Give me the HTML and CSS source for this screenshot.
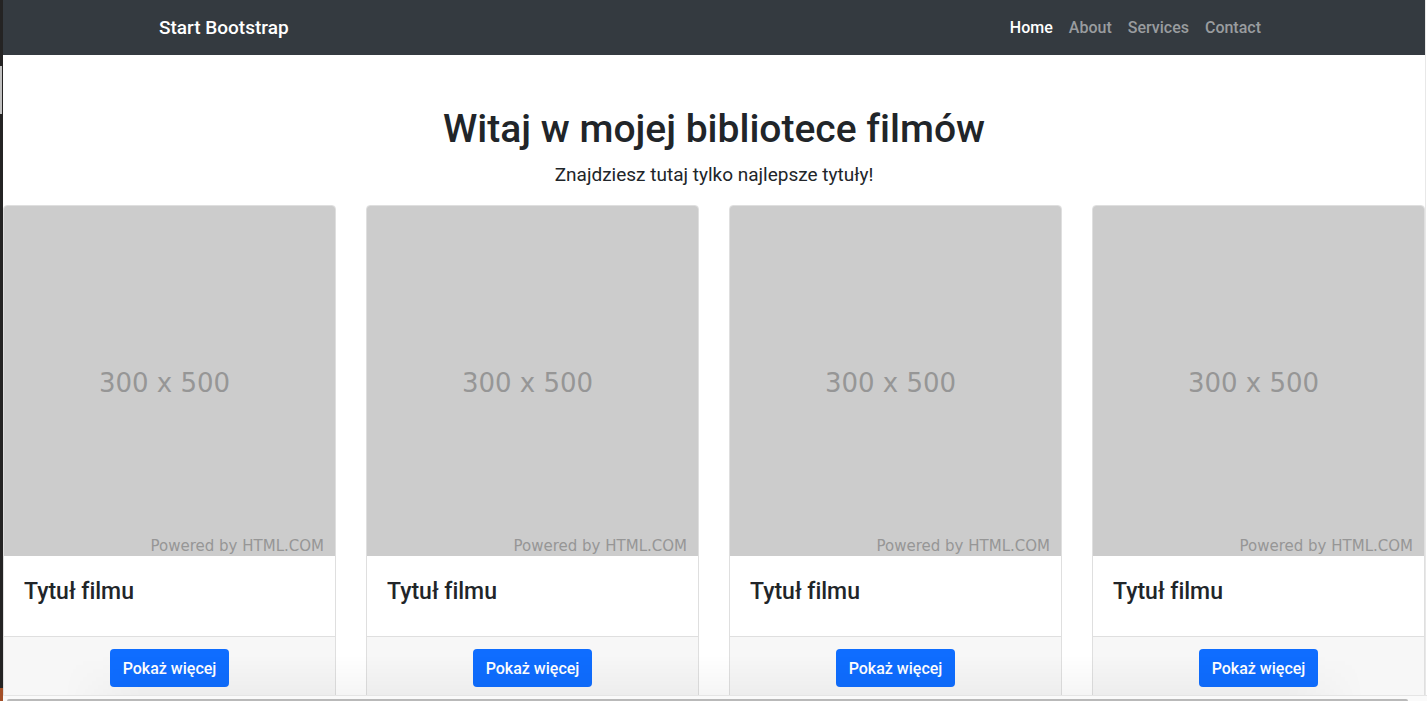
FILE: index.html
```html
<!DOCTYPE html>
<html lang="pl">
<head>
<meta charset="utf-8">
<title>Biblioteka filmów</title>
<link rel="stylesheet" href="styles.css">
</head>
<body>
<div class="backdrop"><div class="backdrop-thumb"></div><div class="backdrop-base"></div></div>
<div class="window">
  <div class="page">
    <nav class="navbar">
      <div class="container">
        <a class="brand" href="#">Start Bootstrap</a>
        <div class="nav-links">
          <a class="nav-link active" href="#">Home</a>
          <a class="nav-link" href="#">About</a>
          <a class="nav-link" href="#">Services</a>
          <a class="nav-link" href="#">Contact</a>
        </div>
      </div>
    </nav>
    <header class="hero">
      <h1 class="hero-title">Witaj w mojej bibliotece filmów</h1>
      <p class="lead">Znajdziesz tutaj tylko najlepsze tytuły!</p>
    </header>
    <main class="cards">
      <article class="card">
        <div class="poster"><span class="poster-size">300 x 500</span><span class="poster-credit">Powered by HTML.COM</span></div>
        <div class="card-body"><h2 class="card-title">Tytuł filmu</h2></div>
        <div class="card-footer"><a class="btn" href="#">Pokaż więcej</a></div>
      </article>
      <article class="card">
        <div class="poster"><span class="poster-size">300 x 500</span><span class="poster-credit">Powered by HTML.COM</span></div>
        <div class="card-body"><h2 class="card-title">Tytuł filmu</h2></div>
        <div class="card-footer"><a class="btn" href="#">Pokaż więcej</a></div>
      </article>
      <article class="card">
        <div class="poster"><span class="poster-size">300 x 500</span><span class="poster-credit">Powered by HTML.COM</span></div>
        <div class="card-body"><h2 class="card-title">Tytuł filmu</h2></div>
        <div class="card-footer"><a class="btn" href="#">Pokaż więcej</a></div>
      </article>
      <article class="card">
        <div class="poster"><span class="poster-size">300 x 500</span><span class="poster-credit">Powered by HTML.COM</span></div>
        <div class="card-body"><h2 class="card-title">Tytuł filmu</h2></div>
        <div class="card-footer"><a class="btn" href="#">Pokaż więcej</a></div>
      </article>
    </main>
    <div class="shade"></div>
  </div>
  <div class="scroll-track"><div class="scroll-thumb"></div></div>
</div>
</body>
</html>
```
FILE: styles.css
```css
* { box-sizing: border-box; }
body {
  margin: 0;
  height: 100vh;
  display: flex;
  overflow: hidden;
  background: #fff;
  color: #212529;
  font: 400 16px/24px Roboto, "Liberation Sans", sans-serif;
  font-variant-ligatures: none;
}
a { text-decoration: none; }

.backdrop {
  width: 3px;
  padding-top: 66px;
  display: flex;
  flex-direction: column;
  background: #242323;
}
.backdrop-thumb { width: 2px; height: 48px; background: #c1c1c1; }
.backdrop-base { height: 13px; margin-top: auto; background: #a34f27; }

.window { flex: 1; min-width: 0; display: flex; flex-direction: column; }
.page {
  flex: 1;
  min-height: 0;
  overflow: hidden;
  position: relative;
  margin-right: 1px;
  border-right: 1px solid #e8e8e8;
}

.navbar { background: #343a40; padding: 8px 0 7px; }
.container {
  max-width: 1140px;
  margin: 0 auto;
  padding: 0 15px;
  display: flex;
  align-items: center;
  justify-content: space-between;
}
.brand { color: #fff; font-size: 19px; font-weight: 500; }
.nav-links { display: flex; }
.nav-link { padding: 8px; color: #999c9f; font-size: 16px; font-weight: 500; }
.nav-link.active { color: #fff; }

.hero { padding-top: 50px; text-align: center; }
.hero-title { margin: 0 0 8px; font-size: 39px; line-height: 48px; font-weight: 500; }
.lead { margin: 0 0 16px; font-size: 19px; line-height: 28px; font-weight: 400; }

.cards { display: grid; grid-template-columns: repeat(4, 1fr); gap: 30px; }
.card {
  border: 1px solid #dfdfdf;
  border-radius: 4px;
  overflow: hidden;
  background: #fff;
}
.poster {
  position: relative;
  height: 350px;
  padding: 3px 10px 0 0;
  display: flex;
  align-items: center;
  justify-content: center;
  background: #ccc;
  color: #969696;
  font-family: "DejaVu Sans", sans-serif;
}
.poster-size { font-size: 26px; }
.poster-credit { position: absolute; right: 11px; bottom: 0; font-size: 15px; line-height: 20px; }
.card-body { padding: 21px 20px; height: 80px; }
.card-title { margin: 0; font-size: 23px; line-height: 29px; font-weight: 500; }
.card-footer {
  padding: 12px 20px;
  border-top: 1px solid #dfdfdf;
  background: #f7f7f7;
  text-align: center;
}
.btn {
  display: inline-block;
  padding: 8px 13px 6px;
  border-radius: 4px;
  background: #0f6dff;
  color: #fff;
  font-size: 16px;
  font-weight: 500;
  line-height: 24px;
}

.shade {
  position: absolute;
  left: 60px;
  right: 60px;
  bottom: 0;
  height: 40px;
  background: linear-gradient(to top, rgba(0, 0, 0, .04), transparent);
  mask-image: linear-gradient(to right, transparent, #000 80px, #000 calc(100% - 80px), transparent);
}
.scroll-track { height: 6px; padding: 3px 19px 0 4px; border-top: 1px solid #e5e5e5; background: #fafafa; }
.scroll-thumb { height: 2px; border-radius: 2px 2px 0 0; background: #b9b9b9; }
```
